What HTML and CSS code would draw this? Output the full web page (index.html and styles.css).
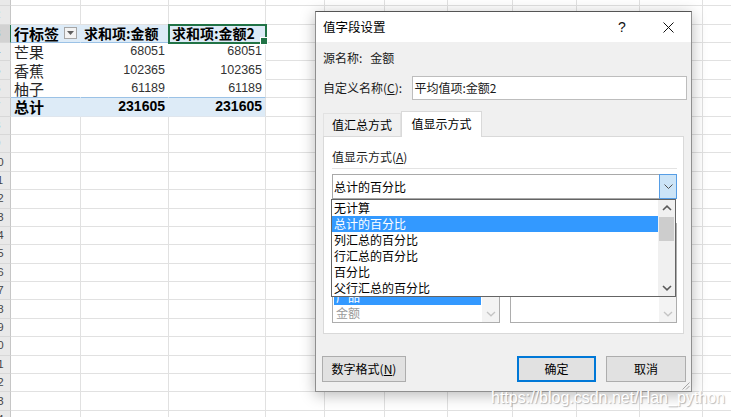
FILE: index.html
```html
<!DOCTYPE html>
<html lang="zh-CN">
<head>
<meta charset="utf-8">
<title>值字段设置</title>
<link rel="stylesheet" href="styles.css">
</head>
<body>
<div class="sheet">
  <div class="row"><div class="rh"><span>1</span></div><div class="c"></div><div class="c"></div><div class="c"></div><div class="c"></div><div class="c"></div><div class="c"></div><div class="c"></div><div class="c"></div><div class="c"></div><div class="c"></div><div class="c"></div></div>
  <div class="row"><div class="rh"><span>2</span></div><div class="c"></div><div class="c"></div><div class="c"></div><div class="c"></div><div class="c"></div><div class="c"></div><div class="c"></div><div class="c"></div><div class="c"></div><div class="c"></div><div class="c"></div></div>
  <div class="row"><div class="rh sel"><span>3</span></div>
    <div class="c pv ph lbl">行标签<span class="fbtn"><svg width="7" height="4" viewBox="0 0 7 4"><path d="M0 0H7L3.5 4Z" fill="#5f5f5f"/></svg></span></div>
    <div class="c pv ph">求和项:金额</div>
    <div class="c pv cr ph selc">求和项:金额2</div>
    <div class="c"></div><div class="c"></div><div class="c"></div><div class="c"></div><div class="c"></div><div class="c"></div><div class="c"></div><div class="c"></div></div>
  <div class="row"><div class="rh"><span>4</span></div>
    <div class="c pv lbl">芒果</div><div class="c pv num">68051</div><div class="c pv cr num">68051</div>
    <div class="c"></div><div class="c"></div><div class="c"></div><div class="c"></div><div class="c"></div><div class="c"></div><div class="c"></div><div class="c"></div></div>
  <div class="row"><div class="rh"><span>5</span></div>
    <div class="c pv lbl">香蕉</div><div class="c pv num">102365</div><div class="c pv cr num">102365</div>
    <div class="c"></div><div class="c"></div><div class="c"></div><div class="c"></div><div class="c"></div><div class="c"></div><div class="c"></div><div class="c"></div></div>
  <div class="row"><div class="rh"><span>6</span></div>
    <div class="c pv bt lbl">柚子</div><div class="c pv bt num">61189</div><div class="c pv cr bt num">61189</div>
    <div class="c"></div><div class="c"></div><div class="c"></div><div class="c"></div><div class="c"></div><div class="c"></div><div class="c"></div><div class="c"></div></div>
  <div class="row"><div class="rh"><span>7</span></div>
    <div class="c pv pt lbl">总计</div><div class="c pv pt num">231605</div><div class="c pv cr pt num">231605</div>
    <div class="c"></div><div class="c"></div><div class="c"></div><div class="c"></div><div class="c"></div><div class="c"></div><div class="c"></div><div class="c"></div></div>
  <div class="row"><div class="rh"><span>8</span></div><div class="c"></div><div class="c"></div><div class="c"></div><div class="c"></div><div class="c"></div><div class="c"></div><div class="c"></div><div class="c"></div><div class="c"></div><div class="c"></div><div class="c"></div></div>
  <div class="row"><div class="rh"><span>9</span></div><div class="c"></div><div class="c"></div><div class="c"></div><div class="c"></div><div class="c"></div><div class="c"></div><div class="c"></div><div class="c"></div><div class="c"></div><div class="c"></div><div class="c"></div></div>
  <div class="row"><div class="rh"><span>10</span></div><div class="c"></div><div class="c"></div><div class="c"></div><div class="c"></div><div class="c"></div><div class="c"></div><div class="c"></div><div class="c"></div><div class="c"></div><div class="c"></div><div class="c"></div></div>
  <div class="row"><div class="rh"><span>11</span></div><div class="c"></div><div class="c"></div><div class="c"></div><div class="c"></div><div class="c"></div><div class="c"></div><div class="c"></div><div class="c"></div><div class="c"></div><div class="c"></div><div class="c"></div></div>
  <div class="row"><div class="rh"><span>12</span></div><div class="c"></div><div class="c"></div><div class="c"></div><div class="c"></div><div class="c"></div><div class="c"></div><div class="c"></div><div class="c"></div><div class="c"></div><div class="c"></div><div class="c"></div></div>
  <div class="row"><div class="rh"><span>13</span></div><div class="c"></div><div class="c"></div><div class="c"></div><div class="c"></div><div class="c"></div><div class="c"></div><div class="c"></div><div class="c"></div><div class="c"></div><div class="c"></div><div class="c"></div></div>
  <div class="row"><div class="rh"><span>14</span></div><div class="c"></div><div class="c"></div><div class="c"></div><div class="c"></div><div class="c"></div><div class="c"></div><div class="c"></div><div class="c"></div><div class="c"></div><div class="c"></div><div class="c"></div></div>
  <div class="row"><div class="rh"><span>15</span></div><div class="c"></div><div class="c"></div><div class="c"></div><div class="c"></div><div class="c"></div><div class="c"></div><div class="c"></div><div class="c"></div><div class="c"></div><div class="c"></div><div class="c"></div></div>
  <div class="row"><div class="rh"><span>16</span></div><div class="c"></div><div class="c"></div><div class="c"></div><div class="c"></div><div class="c"></div><div class="c"></div><div class="c"></div><div class="c"></div><div class="c"></div><div class="c"></div><div class="c"></div></div>
  <div class="row"><div class="rh"><span>17</span></div><div class="c"></div><div class="c"></div><div class="c"></div><div class="c"></div><div class="c"></div><div class="c"></div><div class="c"></div><div class="c"></div><div class="c"></div><div class="c"></div><div class="c"></div></div>
  <div class="row"><div class="rh"><span>18</span></div><div class="c"></div><div class="c"></div><div class="c"></div><div class="c"></div><div class="c"></div><div class="c"></div><div class="c"></div><div class="c"></div><div class="c"></div><div class="c"></div><div class="c"></div></div>
  <div class="row"><div class="rh"><span>19</span></div><div class="c"></div><div class="c"></div><div class="c"></div><div class="c"></div><div class="c"></div><div class="c"></div><div class="c"></div><div class="c"></div><div class="c"></div><div class="c"></div><div class="c"></div></div>
  <div class="row"><div class="rh"><span>20</span></div><div class="c"></div><div class="c"></div><div class="c"></div><div class="c"></div><div class="c"></div><div class="c"></div><div class="c"></div><div class="c"></div><div class="c"></div><div class="c"></div><div class="c"></div></div>
  <div class="row"><div class="rh"><span>21</span></div><div class="c"></div><div class="c"></div><div class="c"></div><div class="c"></div><div class="c"></div><div class="c"></div><div class="c"></div><div class="c"></div><div class="c"></div><div class="c"></div><div class="c"></div></div>
  <div class="row"><div class="rh"><span>22</span></div><div class="c"></div><div class="c"></div><div class="c"></div><div class="c"></div><div class="c"></div><div class="c"></div><div class="c"></div><div class="c"></div><div class="c"></div><div class="c"></div><div class="c"></div></div>
  <div class="row"><div class="rh"><span>23</span></div><div class="c"></div><div class="c"></div><div class="c"></div><div class="c"></div><div class="c"></div><div class="c"></div><div class="c"></div><div class="c"></div><div class="c"></div><div class="c"></div><div class="c"></div></div>
  <div class="row"><div class="rh"><span>24</span></div><div class="c"></div><div class="c"></div><div class="c"></div><div class="c"></div><div class="c"></div><div class="c"></div><div class="c"></div><div class="c"></div><div class="c"></div><div class="c"></div><div class="c"></div></div>
</div>

<div class="dialog">
  <div class="titlebar">
    <span class="title">值字段设置</span>
    <span class="capbtn help">?</span>
    <span class="capbtn"><svg width="11" height="11" viewBox="0 0 11 11"><path d="M0.5 0.5L10.5 10.5M10.5 0.5L0.5 10.5" stroke="#111" stroke-width="1"/></svg></span>
  </div>
  <div class="dbody">
    <div class="srcrow"><span>源名称:</span><span>金额</span></div>
    <div class="namerow"><span class="nlabel">自定义名称(<u>C</u>):</span><div class="input">平均值项:金额2</div></div>
    <div class="tabs"><div class="tab">值汇总方式</div><div class="tab active">值显示方式</div></div>
    <div class="panel">
      <div class="plabel">值显示方式(<u>A</u>)</div>
      <div class="sep"></div>
      <div class="combo">
        <span class="ctext">总计的百分比</span>
        <span class="cbtn"><svg width="9" height="5" viewBox="0 0 9 5"><path d="M0.5 0.5L4.5 4.5L8.5 0.5" fill="none" stroke="#505050"/></svg></span>
        <div class="droplist">
          <div class="items">
            <div class="item">无计算</div>
            <div class="item hl">总计的百分比</div>
            <div class="item">列汇总的百分比</div>
            <div class="item">行汇总的百分比</div>
            <div class="item">百分比</div>
            <div class="item">父行汇总的百分比</div>
          </div>
          <div class="vscroll">
            <span class="arrow"><svg width="10" height="6" viewBox="0 0 10 6"><path d="M1 5L5 1.2L9 5" fill="none" stroke="#5a5a5a" stroke-width="1.6"/></svg></span>
            <span class="thumb"></span>
            <span class="track"></span>
            <span class="arrow"><svg width="10" height="6" viewBox="0 0 10 6"><path d="M1 1L5 4.8L9 1" fill="none" stroke="#5a5a5a" stroke-width="1.6"/></svg></span>
          </div>
        </div>
      </div>
      <div class="flabels"></div>
      <div class="lists">
        <div class="lbox left">
          <div class="litems">
            <div class="litem"></div>
            <div class="litem"></div>
            <div class="litem"></div>
            <div class="litem"></div>
            <div class="litem on">产品</div>
            <div class="litem">金额</div>
          </div>
          <div class="dscroll"><span class="arrow"></span><span class="track"></span><span class="arrow"><svg width="10" height="6" viewBox="0 0 10 6"><path d="M1 1L5 4.8L9 1" fill="none" stroke="#c4c4c4" stroke-width="1.3"/></svg></span></div>
        </div>
        <div class="lbox right">
          <div class="litems"></div>
          <div class="dscroll"><span class="arrow"></span><span class="track"></span><span class="arrow"><svg width="10" height="6" viewBox="0 0 10 6"><path d="M1 1L5 4.8L9 1" fill="none" stroke="#c4c4c4" stroke-width="1.3"/></svg></span></div>
        </div>
      </div>
    </div>
    <div class="buttons">
      <div class="btn numfmt">数字格式(<u>N</u>)</div>
      <div class="spacer"></div>
      <div class="btn ok">确定</div>
      <div class="btn cancel">取消</div>
    </div>
  </div>
  <svg class="grip" width="9" height="9" viewBox="0 0 9 9"><path d="M8.5 1.5L1.5 8.5M8.5 5L5 8.5" stroke="#a3a3a3" stroke-width="1"/></svg>
</div>

<div class="watermark">https://blog.csdn.net/Han_python</div>
</body>
</html>
```

FILE: styles.css
```css
* { box-sizing: border-box; }
html, body { margin: 0; padding: 0; }
body {
  width: 731px;
  height: 417px;
  overflow: hidden;
  position: relative;
  background: #fff;
  font-family: "Noto Sans CJK SC", sans-serif;
}

/* ---------- spreadsheet ---------- */
.sheet { margin-top: -12.2px; }
.row {
  display: grid;
  grid-template-columns: 11px 70px 88px 97px 59px 60px 63px 65px 64px 63px 63px 63px;
  height: 18.4px;
}
.c {
  border-right: 1px solid #e1e1e1;
  border-bottom: 1px solid #e1e1e1;
  display: flex;
  align-items: center;
  padding: 0 3px;
  white-space: nowrap;
  overflow: hidden;
  color: #262626;
  font-size: 14px;
  line-height: 17px;
}
.rh {
  background: #e9e9e9;
  border-right: 1px solid #c6c6c6;
  border-bottom: 1px solid #d8d8d8;
  display: flex;
  align-items: center;
  overflow: hidden;
}
.rh span {
  flex: 0 0 30px;
  margin-left: -17.6px;
  text-align: center;
  font: 11px/1 "Liberation Sans", sans-serif;
  color: #444;
}
.rh.sel { background: #d2d2d2; border-right-color: #217346; }
.rh.sel span { color: #217346; }

.pv { border-right-color: transparent; border-bottom-color: transparent; background: #fff; }
.pv.cr { border-right-color: #e1e1e1; }
.ph { background: #ddebf7; border-bottom-color: #9bc2e6; font-weight: 700; color: #000; }
.bt { border-bottom-color: #9bc2e6; }
.pt { background: #ddebf7; border-bottom-color: #dfe6ee; font-weight: 700; color: #000; }
.lbl { font-size: 15px; }
.num {
  justify-content: flex-end;
  font-family: "Liberation Sans", sans-serif;
  font-size: 12.5px;
  color: #333;
}
.pt.num { font-size: 14px; color: #000; }

.fbtn {
  margin-left: auto;
  width: 13px;
  height: 12px;
  border: 1px solid #a6a6a6;
  background: #f3f3f3;
  display: flex;
  align-items: center;
  justify-content: center;
  flex: 0 0 13px;
}
.selc {
  position: relative;
  overflow: visible;
  outline: 2px solid #217346;
  outline-offset: -1px;
  z-index: 1;
}
.selc::after {
  content: "";
  position: absolute;
  right: -3px;
  bottom: -3px;
  width: 6px;
  height: 6px;
  background: #217346;
  border: 1px solid #fff;
}

/* ---------- dialog ---------- */
.dialog {
  position: absolute;
  left: 315px;
  top: 11px;
  width: 377px;
  height: 381px;
  border: 1px solid #8f8f8f;
  border-top-color: #555;
  background: #f0f0f0;
  box-shadow: 0 3px 14px rgba(0, 0, 0, 0.28);
  display: flex;
  flex-direction: column;
  font-size: 12px;
  color: #000;
  z-index: 5;
}
.titlebar {
  height: 30px;
  background: #fff;
  display: flex;
  align-items: center;
  flex: 0 0 30px;
}
.title { flex: 1; padding-left: 7px; font-size: 12.5px; line-height: 16px; }
.capbtn {
  width: 46px;
  height: 30px;
  display: flex;
  align-items: center;
  justify-content: center;
}
.help { font: 14px/1 "Liberation Sans", sans-serif; color: #111; }

.dbody {
  flex: 1;
  padding: 0 7px;
  display: flex;
  flex-direction: column;
}
.srcrow {
  margin-top: 8px;
  height: 16px;
  line-height: 16px;
  display: flex;
  gap: 8px;
  color: #1a1a1a;
}
.namerow {
  margin-top: 10px;
  height: 24px;
  display: flex;
  align-items: center;
  color: #1a1a1a;
}
.nlabel { flex: 0 0 88.5px; line-height: 16px; }
.input {
  flex: 1;
  height: 24px;
  margin-right: -3px;
  border: 1px solid #bdbdbd;
  background: #fff;
  padding-left: 2px;
  line-height: 21px;
}
.tabs {
  margin-top: 11px;
  height: 26px;
  margin-bottom: -1px;
  display: flex;
  align-items: flex-end;
  position: relative;
  z-index: 1;
}
.tab {
  width: 78px;
  height: 23px;
  margin-bottom: 1px;
  display: flex;
  align-items: center;
  justify-content: center;
  border: 1px solid #e2e2e2;
  border-bottom: none;
  background: #f0f0f0;
  line-height: 16px;
}
.tab.active {
  width: 81px;
  height: 26px;
  margin-bottom: 0;
  background: #fff;
  border-color: #d9d9d9;
  padding-bottom: 2px;
}
.panel {
  height: 198px;
  border: 1px solid #d9d9d9;
  background: #fff;
  padding: 0 6px 0 8px;
  display: flex;
  flex-direction: column;
}
.plabel { margin-top: 12px; height: 16px; line-height: 16px; color: #1a1a1a; }
.sep { margin-top: 3px; height: 1px; background: #e3e3e3; flex: 0 0 1px; }
.combo {
  margin-top: 5px;
  height: 25px;
  flex: 0 0 25px;
  border: 1px solid #a9a9a9;
  background: #fff;
  display: flex;
  align-items: center;
  position: relative;
  z-index: 2;
}
.ctext { padding-left: 1px; line-height: 16px; flex: 1; }
.cbtn {
  align-self: stretch;
  width: 18px;
  margin: -1px -1px -1px 0;
  border: 1px solid #569de5;
  background: #cce4f7;
  display: flex;
  align-items: center;
  justify-content: center;
}
.droplist {
  position: absolute;
  left: -2px;
  top: 24px;
  width: 345px;
  height: 98px;
  border: 1px solid #646464;
  background: #fff;
  display: flex;
}
.items { flex: 1; }
.item { height: 16px; line-height: 16px; padding-left: 2px; color: #000; white-space: nowrap; }
.item.hl { background: #3399ff; color: #fff; }
.vscroll {
  width: 17px;
  background: #f0f0f0;
  display: flex;
  flex-direction: column;
}
.arrow { height: 16px; flex: 0 0 16px; display: flex; align-items: center; justify-content: center; }
.thumb { height: 24px; flex: 0 0 24px; margin: 1px 1px 0; background: #cdcdcd; }
.track { flex: 1; }

.flabels { height: 24px; flex: 0 0 24px; }
.lists { display: flex; gap: 10px; height: 100px; flex: 0 0 100px; }
.lbox {
  border: 1px solid #adadad;
  background: #fff;
  display: flex;
}
.lbox.left { flex: 0 0 168px; }
.lbox.right { flex: 1; }
.litems { flex: 1; padding: 1px 1px 0; }
.litem { height: 16px; line-height: 16px; padding-left: 2px; color: #9a9a9a; }
.litem.on { background: #3399ff; color: #fff; }
.dscroll { width: 17px; background: #f3f3f3; display: flex; flex-direction: column; }

.buttons {
  margin-top: 22px;
  height: 26px;
  display: flex;
}
.btn {
  height: 26px;
  border: 1px solid #adadad;
  background: #e1e1e1;
  display: flex;
  align-items: center;
  justify-content: center;
  line-height: 16px;
  color: #000;
}
.numfmt { width: 84px; margin-left: -1px; }
.spacer { flex: 1; }
.ok { width: 79px; border: 2px solid #0078d7; }
.cancel { width: 80px; margin-left: 10px; margin-right: -2px; }
.grip { position: absolute; right: 1px; bottom: 1px; }

/* ---------- watermark ---------- */
.watermark {
  position: absolute;
  left: 491px;
  top: 389px;
  font: 16px/18px "Liberation Sans", sans-serif;
  color: #fff;
  text-shadow: 1px 1px 1px rgba(0, 0, 0, 0.28);
  white-space: nowrap;
  z-index: 6;
}
```
